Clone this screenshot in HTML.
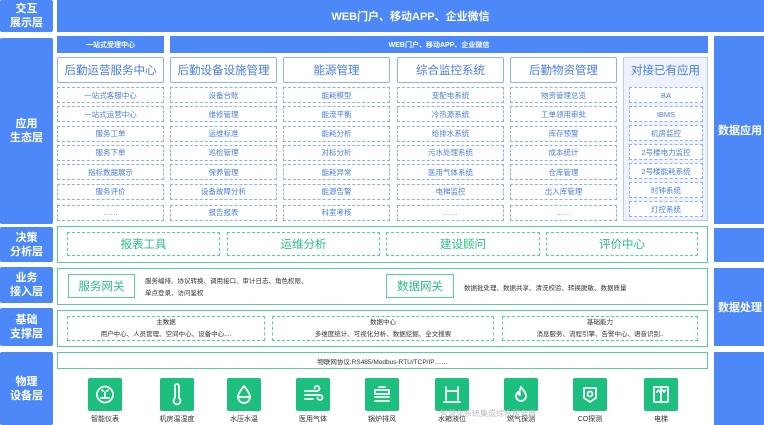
<!DOCTYPE html><html><head><meta charset="utf-8"><style>
*{margin:0;padding:0;box-sizing:border-box}
body{width:764px;height:425px;background:#fff;font-family:"Liberation Sans","Noto Sans CJK SC",sans-serif;position:relative;overflow:hidden}
.a{position:absolute}
.blue{background:#4c88f7;color:#fff;font-weight:bold;display:flex;align-items:center;justify-content:center;text-align:center}
.lab{font-size:11px;line-height:14px;border-radius:2px}
.hd{border:1px solid #8fb0ef;border-radius:2px;color:#4a7de0;font-size:11.5px;display:flex;align-items:center;justify-content:center;background:#fff}
.it{border:1px dashed #8fb0ef;color:#4a7de0;font-size:7.5px;display:flex;align-items:center;justify-content:center;height:16px}
.gp{border:1.5px solid #56cf9c;background:#fff}
.gd{border:1px dashed #56cf9c;color:#2dbd83;display:flex;align-items:center;justify-content:center}
.ic{width:34px;height:33px;background:#1dbf7e;border-radius:2px}
.il{font-size:7px;color:#333;width:60px;text-align:center}
.sm{font-size:6.5px;color:#333}
</style></head><body>
<div class="a blue lab" style="left:0;top:0;width:53px;height:32px">交互<br>展示层</div>
<div class="a blue" style="left:57px;top:0;width:707px;height:32px;font-size:11px">WEB门户、移动APP、企业微信</div>
<div class="a blue lab" style="left:0;top:38px;width:53px;height:186px">应用<br>生态层</div>
<div class="a blue lab" style="left:0;top:227px;width:53px;height:35px">决策<br>分析层</div>
<div class="a blue lab" style="left:0;top:267px;width:53px;height:36px">业务<br>接入层</div>
<div class="a blue lab" style="left:0;top:308px;width:53px;height:38px">基础<br>支撑层</div>
<div class="a blue lab" style="left:0;top:352px;width:53px;height:73px">物理<br>设备层</div>
<div class="a blue" style="left:714px;top:36px;width:50px;height:188px;font-size:11px;justify-content:flex-start;padding-left:4px">数据应用</div>
<div class="a blue" style="left:714px;top:228px;width:50px;height:34px"></div>
<div class="a blue" style="left:714px;top:268px;width:50px;height:78px;font-size:11px;justify-content:flex-start;padding-left:4px">数据处理</div>
<div class="a blue" style="left:714px;top:352px;width:50px;height:73px"></div>
<div class="a blue" style="left:57px;top:36px;width:107px;height:17px;font-size:7px">一站式受理中心</div>
<div class="a blue" style="left:170px;top:36px;width:538px;height:17px;font-size:7px">WEB门户、移动APP、企业微信</div>
<div class="a" style="left:623px;top:57px;width:85px;height:164px;background:#eef2fd;border:1px solid #b9ccf3"></div>
<div id="cols"></div>
<div class="a gp" style="left:57px;top:226px;width:651px;height:37px"></div>
<div class="a gd" style="left:67px;top:232px;width:153px;height:24px;font-size:11.5px">报表工具</div>
<div class="a gd" style="left:227px;top:232px;width:153px;height:24px;font-size:11.5px">运维分析</div>
<div class="a gd" style="left:386px;top:232px;width:154px;height:24px;font-size:11.5px">建设顾问</div>
<div class="a gd" style="left:546px;top:232px;width:152px;height:24px;font-size:11.5px">评价中心</div>
<div class="a gp" style="left:57px;top:268px;width:651px;height:37px"></div>
<div class="a gd" style="left:68px;top:274px;width:67px;height:24px;font-size:11.5px;border:1.5px solid #56cf9c">服务网关</div>
<div class="a sm" style="left:145px;top:276px;line-height:12px">服务编排、协议转换、调用接口、审计日志、角色权限、<br>单点登录、访问鉴权</div>
<div class="a gd" style="left:386px;top:274px;width:68px;height:24px;font-size:11.5px;border:1.5px solid #56cf9c">数据网关</div>
<div class="a sm" style="left:464px;top:282px">数据批处理、数据共享、清洗校验、转换脱敏、数据质量</div>
<div class="a gp" style="left:57px;top:310px;width:651px;height:37px"></div>
<div class="a gd sm" style="left:67px;top:316px;width:198px;height:25px;flex-direction:column;line-height:12px;color:#333"><span>主数据</span><span>用户中心、人员管理、空间中心、设备中心....</span></div>
<div class="a gd sm" style="left:272px;top:316px;width:222px;height:25px;flex-direction:column;line-height:12px;color:#333"><span>数据中心</span><span>多维度统计、可视化分析、数据挖掘、全文搜索</span></div>
<div class="a gd sm" style="left:502px;top:316px;width:196px;height:25px;flex-direction:column;line-height:12px;color:#333"><span>基础能力</span><span>消息服务、流程引擎、告警中心、语音识别..</span></div>
<div class="a gp sm" style="left:57px;top:352px;width:651px;height:17px;display:flex;align-items:center;justify-content:center">物联网协议:RS485/Modbus-RTU/TCP/IP……</div>
<div id="icons"></div>
<div class="a" style="left:440px;top:408px;font-size:8px;color:#bbb">智慧化系统集成综合服务商</div>
<script>
var cols=[[57,"后勤运营服务中心",["一站式客服中心","一站式运营中心","服务工单","服务下单","指标数据展示","服务评价","……"]],
[170,"后勤设备设施管理",["设备台账","维修管理","运维标准","巡检管理","保养管理","设备故障分析","报告报表"]],
[283,"能源管理",["能耗模型","能流平衡","能耗分析","对标分析","能耗异常","能源告警","科室考核"]],
[397,"综合监控系统",["变配电系统","冷热源系统","给排水系统","污水处理系统","医用气体系统","电梯监控","……"]],
[510,"后勤物资管理",["物资管理总览","工单领用审批","库存预警","成本统计","仓库管理","出入库管理","……"]]];
var h="";
cols.forEach(function(c){h+='<div class="a hd" style="left:'+c[0]+'px;top:57px;width:107px;height:26px">'+c[1]+'</div>';
c[2].forEach(function(t,i){var y=87+i*19.3+(i==6?2:0);h+='<div class="a it" style="left:'+c[0]+'px;top:'+y+'px;width:107px">'+t+'</div>';});});
h+='<div class="a" style="left:623px;top:57px;width:85px;height:26px;color:#4a7de0;font-size:11.5px;display:flex;align-items:center;justify-content:center">对接已有应用</div>';
["BA","IBMS","机房监控","2号楼电力监控","2号楼能耗系统","时钟系统","灯控系统"].forEach(function(t,i){h+='<div class="a it" style="left:629px;top:'+(87+i*19)+'px;width:74px;background:#fff">'+t+'</div>';});
document.getElementById("cols").innerHTML=h;
var P={
g:'<circle cx="17" cy="16.5" r="8"/><path d="M13 20h8M17 20v-6M14 12l1 1M20 12l-1 1"/>',
t:'<path d="M15 8v12a3.5 3.5 0 1 0 4 0V8a2 2 0 0 0-4 0z"/>',
d:'<path d="M17 8c-4 5-6 8-6 11a6 6 0 0 0 12 0c0-3-2-6-6-11z"/><path d="M12 19h10"/>',
w:'<path d="M9 13h12a2.5 2.5 0 1 0-2.5-2.5M9 17h15a2.5 2.5 0 1 1-2.5 2.5M9 21h8"/>',
b:'<path d="M10 12h14v4H10zM10 19h14M10 23h14M14 9h6"/>',
k:'<path d="M11 9v13M23 9v13M11 13h12M9 24h16"/>',
f:'<path d="M17 9c3 4 5 6 5 9a5 5 0 0 1-10 0c0-2 1-3 2-4 0 2 1 3 2 3-1-3 0-6 1-8z"/>',
c:'<path d="M11 10h12v10l-6 4-6-4z"/><circle cx="17" cy="16" r="2.5"/>',
e:'<path d="M10 9h14v15H10zM17 9v15M13 14l1.5-2 1.5 2M18.5 12l1.5 2 1.5-2"/>'};
var ic=[[105,"智能仪表","g"],[177,"机房温湿度","t"],[244,"水压水温","d"],[313,"医用气体","w"],[382,"锅炉排风","b"],[452,"水箱液位","k"],[521,"燃气探测","f"],[590,"CO探测","c"],[661,"电梯","e"]];
var g="";ic.forEach(function(c){g+='<div class="a ic" style="left:'+(c[0]-17)+'px;top:378px"><svg width="34" height="33" viewBox="0 0 34 33" fill="none" stroke="#fff" stroke-width="1.8" stroke-linecap="round" stroke-linejoin="round">'+P[c[2]]+'</svg></div><div class="a il" style="left:'+(c[0]-30)+'px;top:414px">'+c[1]+'</div>';});
document.getElementById("icons").innerHTML=g;
</script>
</body></html>
